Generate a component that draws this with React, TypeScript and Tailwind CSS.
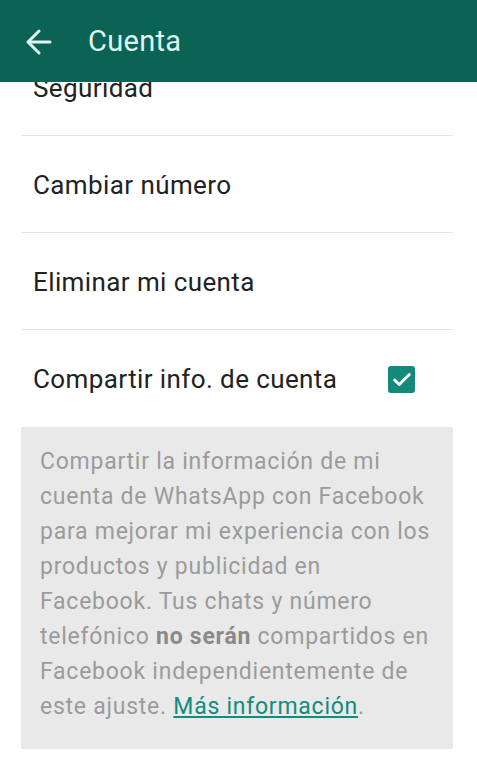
import { Check } from "lucide-react";

const ROWS = ["Seguridad", "Cambiar número", "Eliminar mi cuenta"];

const DESC_LINES = [
  "Compartir la información de mi",
  "cuenta de WhatsApp con Facebook",
  "para mejorar mi experiencia con los",
  "productos y publicidad en",
  "Facebook. Tus chats y número",
];

function BackArrow() {
  return (
    <svg width="26" height="26" viewBox="0 0 26 26" fill="none" stroke="currentColor" strokeWidth="3" strokeLinecap="round" strokeLinejoin="round">
      <path d="M24 13H3" />
      <path d="M13 2 2 13l11 11" />
    </svg>
  );
}

export default function App() {
  return (
    <div className="h-[761px] w-[477px] overflow-hidden bg-white font-['Roboto',sans-serif]">
      <header className="relative z-10 flex h-[82px] items-center bg-[#0b6356] text-[#dff5ef]">
        <div className="ml-[26px] mt-[1px]">
          <BackArrow />
        </div>
        <h1 className="ml-[36px] text-[29px] leading-none tracking-[0.3px]">Cuenta</h1>
      </header>

      <div className="-mt-[43px] ml-[21px] mr-[24px]">
        {ROWS.map((label) => (
          <div key={label} className="flex h-[97px] items-center border-b border-[#e4e4e4] px-[12px] pt-[3px] text-[26px] tracking-[0.4px] text-[#222]">
            {label}
          </div>
        ))}
        <div className="flex h-[97px] items-center justify-between pl-[12px] pr-[38px] pt-[2px] text-[26px] tracking-[0.4px] text-[#222]">
          <span>Compartir info. de cuenta</span>
          <span className="flex h-[27px] w-[27px] items-center justify-center rounded-[3px] bg-[#148a7a]">
            <Check size={22} strokeWidth={3.2} color="#ffffff" />
          </span>
        </div>
        <div className="bg-[#e9e9e9] pb-[25px] pl-[19px] pt-[17px] text-[23px] leading-[35px] tracking-[0.75px] whitespace-nowrap text-[#9b9b9b]">
          {DESC_LINES.map((line) => (
            <div key={line}>{line}</div>
          ))}
          <div>
            telefónico <b className="font-bold text-[#8a8a8a]">no serán</b> compartidos en
          </div>
          <div>Facebook independientemente de</div>
          <div>
            este ajuste. <a className="text-[#128c7e] underline underline-offset-2">Más información</a>.
          </div>
        </div>
      </div>
    </div>
  );
}
